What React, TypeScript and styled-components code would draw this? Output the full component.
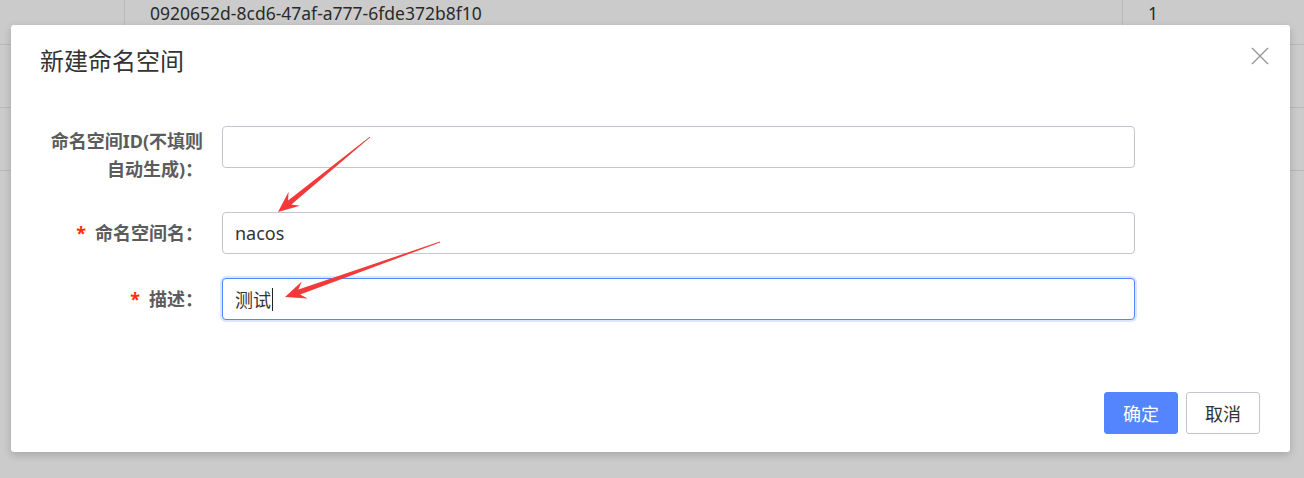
import styled, { createGlobalStyle } from "styled-components";

const GlobalStyle = createGlobalStyle`
  html, body {
    margin: 0;
    padding: 0;
    background: #cbcbcb;
  }
  body {
    font-family: "Noto Sans", "Noto Sans CJK SC", sans-serif;
    overflow: hidden;
  }
`;

const Page = styled.div`
  position: relative;
  width: 1304px;
  height: 478px;
  overflow: hidden;
  background: #cbcbcb;
`;

// table behind the dimmed overlay
const TableRow = styled.div<{ $first?: boolean }>`
  display: grid;
  grid-template-columns: 125px 998px 1fr;
  height: 62px;
  margin-top: ${(p) => (p.$first ? "-18px" : "0")};
  border-bottom: 1px solid #b9b9b9;
`;

const TableCell = styled.div<{ $last?: boolean }>`
  display: flex;
  align-items: center;
  padding-left: 25px;
  font-size: 17.5px;
  color: #2a2a2a;
  border-right: ${(p) => (p.$last ? "none" : "1px solid #b9b9b9")};
`;

const Dialog = styled.div`
  position: absolute;
  left: 11px;
  top: 25px;
  width: 1279px;
  height: 427px;
  background: #fff;
  border-radius: 3px;
  box-shadow: 0 3px 8px rgba(0, 0, 0, 0.18);
  display: flex;
  flex-direction: column;
`;

const Header = styled.div`
  display: flex;
  justify-content: space-between;
  align-items: flex-start;
  padding: 20px 21px 0 29px;
`;

const Title = styled.h2`
  margin: 0;
  font-size: 24px;
  line-height: 32px;
  font-weight: 400;
  color: #333;
`;

const CloseButton = styled.button`
  margin-top: 2px;
  width: 18px;
  height: 18px;
  padding: 0;
  border: 0;
  background: none;
  display: flex;
  cursor: pointer;
`;

const Body = styled.div`
  flex: 1;
  padding: 49px 0 0 29px;
  display: flex;
  flex-direction: column;
  gap: 24px;
`;

const FormRow = styled.div`
  display: grid;
  grid-template-columns: 163px 913px;
  column-gap: 19px;
  align-items: start;
`;

const Label = styled.label<{ $multiline?: boolean }>`
  text-align: right;
  font-size: 18px;
  font-weight: 700;
  color: #5c5c5c;
  line-height: ${(p) => (p.$multiline ? "28px" : "42px")};
  padding: ${(p) => (p.$multiline ? "1px 0 5px" : "0")};
`;

const Required = styled.span`
  color: #ff3000;
  margin-right: 9px;
`;

const Field = styled.div<{ $focused?: boolean }>`
  box-sizing: border-box;
  height: 42px;
  display: flex;
  align-items: center;
  padding: 0 12px;
  border: 1px solid ${(p) => (p.$focused ? "#5584ff" : "#c4c6cf")};
  border-radius: 4px;
  box-shadow: ${(p) => (p.$focused ? "0 0 0 2px rgba(85, 132, 255, 0.2)" : "none")};
  font-size: 18px;
  color: #333;
  background: #fff;
`;

const Caret = styled.span`
  display: inline-block;
  width: 1px;
  height: 23px;
  background: #222;
  margin-left: 1px;
`;

const Footer = styled.div`
  display: flex;
  justify-content: flex-end;
  gap: 8px;
  padding: 0 30px 18px;
`;

const Button = styled.button<{ $primary?: boolean }>`
  width: 74px;
  height: 42px;
  border-radius: 3px;
  font-family: inherit;
  font-size: 18px;
  cursor: pointer;
  border: 1px solid ${(p) => (p.$primary ? "#5584ff" : "#c4c6cf")};
  background: ${(p) => (p.$primary ? "#5584ff" : "#fff")};
  color: ${(p) => (p.$primary ? "#fff" : "#333")};
`;

const Annotations = styled.svg`
  position: absolute;
  left: 0;
  top: 0;
  pointer-events: none;
`;

type Pt = [number, number];

// tapered annotation arrow from tail to tip
function arrowPoints(tail: Pt, tip: Pt, headLen: number, headHalf: number, neck: number) {
  const dx = tip[0] - tail[0];
  const dy = tip[1] - tail[1];
  const len = Math.hypot(dx, dy);
  const ux = dx / len;
  const uy = dy / len;
  const nx = -uy;
  const ny = ux;
  const join: Pt = [tip[0] - ux * headLen * 0.72, tip[1] - uy * headLen * 0.72];
  const wing: Pt = [tip[0] - ux * headLen, tip[1] - uy * headLen];
  const pts: Pt[] = [
    [tail[0] + nx * 0.4, tail[1] + ny * 0.4],
    [join[0] + nx * neck, join[1] + ny * neck],
    [wing[0] + nx * headHalf, wing[1] + ny * headHalf],
    tip,
    [wing[0] - nx * headHalf, wing[1] - ny * headHalf],
    [join[0] - nx * neck, join[1] - ny * neck],
    [tail[0] - nx * 0.4, tail[1] - ny * 0.4],
  ];
  return pts.map((p) => `${p[0].toFixed(1)},${p[1].toFixed(1)}`).join(" ");
}

const arrows: { tail: Pt; tip: Pt }[] = [
  { tail: [370, 137], tip: [278, 212] },
  { tail: [440, 242], tip: [285, 297] },
];

export default function App() {
  return (
    <Page>
      <GlobalStyle />
      <TableRow $first>
        <TableCell />
        <TableCell>0920652d-8cd6-47af-a777-6fde372b8f10</TableCell>
        <TableCell $last>1</TableCell>
      </TableRow>
      <TableRow>
        <TableCell />
        <TableCell />
        <TableCell $last />
      </TableRow>
      <TableRow>
        <TableCell />
        <TableCell />
        <TableCell $last />
      </TableRow>

      <Dialog>
        <Header>
          <Title>新建命名空间</Title>
          <CloseButton aria-label="close">
            <svg width="18" height="18" viewBox="0 0 18 18">
              <path d="M1 1 L17 17 M17 1 L1 17" stroke="#9a9a9a" strokeWidth="1.4" fill="none" />
            </svg>
          </CloseButton>
        </Header>
        <Body>
          <FormRow>
            <Label $multiline>
              命名空间ID(不填则
              <br />
              自动生成)：
            </Label>
            <Field />
          </FormRow>
          <FormRow>
            <Label>
              <Required>*</Required>命名空间名：
            </Label>
            <Field>nacos</Field>
          </FormRow>
          <FormRow>
            <Label>
              <Required>*</Required>描述：
            </Label>
            <Field $focused>
              测试
              <Caret />
            </Field>
          </FormRow>
        </Body>
        <Footer>
          <Button $primary>确定</Button>
          <Button>取消</Button>
        </Footer>
      </Dialog>

      <Annotations width="1304" height="478" viewBox="0 0 1304 478">
        {arrows.map((a, i) => (
          <polygon key={i} points={arrowPoints(a.tail, a.tip, 21, 9, 2.6)} fill="#f23a3a" />
        ))}
      </Annotations>
    </Page>
  );
}
